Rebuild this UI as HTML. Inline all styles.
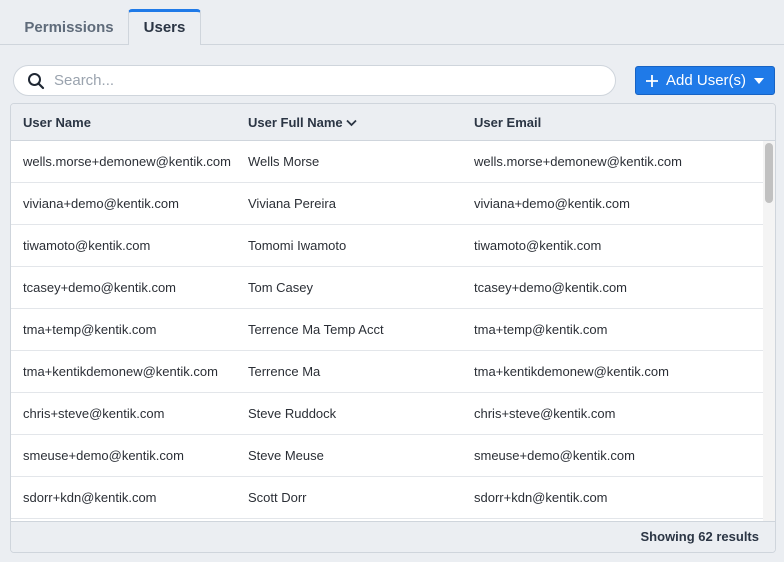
<!DOCTYPE html>
<html><head><style>
*{box-sizing:border-box;margin:0;padding:0}
body{width:784px;height:562px;background:#ebeef2;font-family:"Liberation Sans",sans-serif;position:relative;overflow:hidden;color:#2b2f36}
.tabline{position:absolute;left:0;right:0;top:44px;border-top:1px solid #cfd5dc}
.tab{position:absolute;top:9px;height:36px;font-size:15px;font-weight:bold;line-height:38px;text-align:center}
.t1{left:14px;width:110px;color:#5f6b7a}
.t2{left:128px;width:73px;background:#ebeef2;border:1px solid #cfd5dc;border-bottom:none;border-top:3px solid #1f7ae8;border-radius:4px 4px 0 0;color:#2b3544;line-height:32px;height:36px}
.search{position:absolute;left:13px;top:65px;width:603px;height:31px;background:#fff;border:1px solid #cfd5dc;border-radius:16px}
.search span{position:absolute;left:40px;top:6px;font-size:15px;color:#9aa3ae}
.btn{position:absolute;left:635px;top:66px;width:140px;height:29px;background:#1f7ae8;border:1px solid #1763c4;border-radius:3px;color:#fff;font-size:15px;line-height:27px}
.tbl{position:absolute;left:10px;top:103px;width:766px;height:450px;border:1px solid #cfd5dc;border-radius:4px;background:#fff;overflow:hidden}
.hdr{height:37px;background:#ebeef2;border-bottom:1px solid #cfd5dc;position:relative;font-size:13px;font-weight:bold;color:#2b3544}
.hdr div,.row div{position:absolute;top:0;line-height:37px}
.row{height:42px;border-bottom:1px solid #e3e6ea;position:relative;font-size:13px;color:#2b2f36}
.row div{line-height:41px}
.c1{left:12px}.c2{left:237px}.c3{left:463px}
.foot{position:absolute;left:0;right:0;bottom:0;height:31px;background:#ebeef2;border-top:1px solid #cfd5dc;font-size:13px;font-weight:bold;text-align:right;padding-right:16px;line-height:30px;color:#2b3544}
.sb{position:absolute;left:752px;top:37px;width:13px;height:381px;background:#f4f4f4}
.sb i{position:absolute;left:2px;top:2px;width:8px;height:60px;border-radius:4px;background:#c1c1c1}
</style></head><body>
<div class="tabline"></div>
<div class="tab t1">Permissions</div>
<div class="tab t2">Users</div>
<div class="search"><svg style="position:absolute;left:13px;top:6px" width="18" height="18" viewBox="0 0 18 18"><circle cx="7.5" cy="7.5" r="5.5" fill="none" stroke="#1f2733" stroke-width="2"/><path d="M11.5 11.5L16 16" stroke="#1f2733" stroke-width="2.2" stroke-linecap="round"/></svg><span>Search...</span></div>
<div class="btn"><svg style="position:absolute;left:9px;top:7px" width="14" height="14" viewBox="0 0 14 14"><path d="M7 1v12M1 7h12" stroke="#fff" stroke-width="1.8"/></svg><span style="position:absolute;left:30px">Add User(s)</span><svg style="position:absolute;left:118px;top:11px" width="10" height="6"><path d="M0 0h10L5 6z" fill="#fff"/></svg></div>
<div class="tbl">
<div class="hdr"><div class="c1">User Name</div><div class="c2">User Full Name <svg width="11" height="8" viewBox="0 0 11 8"><path d="M1 1.5l4.5 4.5 4.5-4.5" fill="none" stroke="#2b3544" stroke-width="1.8"/></svg></div><div class="c3">User Email</div></div>
<div class="row"><div class="c1">wells.morse+demonew@kentik.com</div><div class="c2">Wells Morse</div><div class="c3">wells.morse+demonew@kentik.com</div></div>
<div class="row"><div class="c1">viviana+demo@kentik.com</div><div class="c2">Viviana Pereira</div><div class="c3">viviana+demo@kentik.com</div></div>
<div class="row"><div class="c1">tiwamoto@kentik.com</div><div class="c2">Tomomi Iwamoto</div><div class="c3">tiwamoto@kentik.com</div></div>
<div class="row"><div class="c1">tcasey+demo@kentik.com</div><div class="c2">Tom Casey</div><div class="c3">tcasey+demo@kentik.com</div></div>
<div class="row"><div class="c1">tma+temp@kentik.com</div><div class="c2">Terrence Ma Temp Acct</div><div class="c3">tma+temp@kentik.com</div></div>
<div class="row"><div class="c1">tma+kentikdemonew@kentik.com</div><div class="c2">Terrence Ma</div><div class="c3">tma+kentikdemonew@kentik.com</div></div>
<div class="row"><div class="c1">chris+steve@kentik.com</div><div class="c2">Steve Ruddock</div><div class="c3">chris+steve@kentik.com</div></div>
<div class="row"><div class="c1">smeuse+demo@kentik.com</div><div class="c2">Steve Meuse</div><div class="c3">smeuse+demo@kentik.com</div></div>
<div class="row"><div class="c1">sdorr+kdn@kentik.com</div><div class="c2">Scott Dorr</div><div class="c3">sdorr+kdn@kentik.com</div></div>
<div class="row"></div>
<div class="sb"><i></i></div>
<div class="foot">Showing 62 results</div>
</div>
</body></html>
